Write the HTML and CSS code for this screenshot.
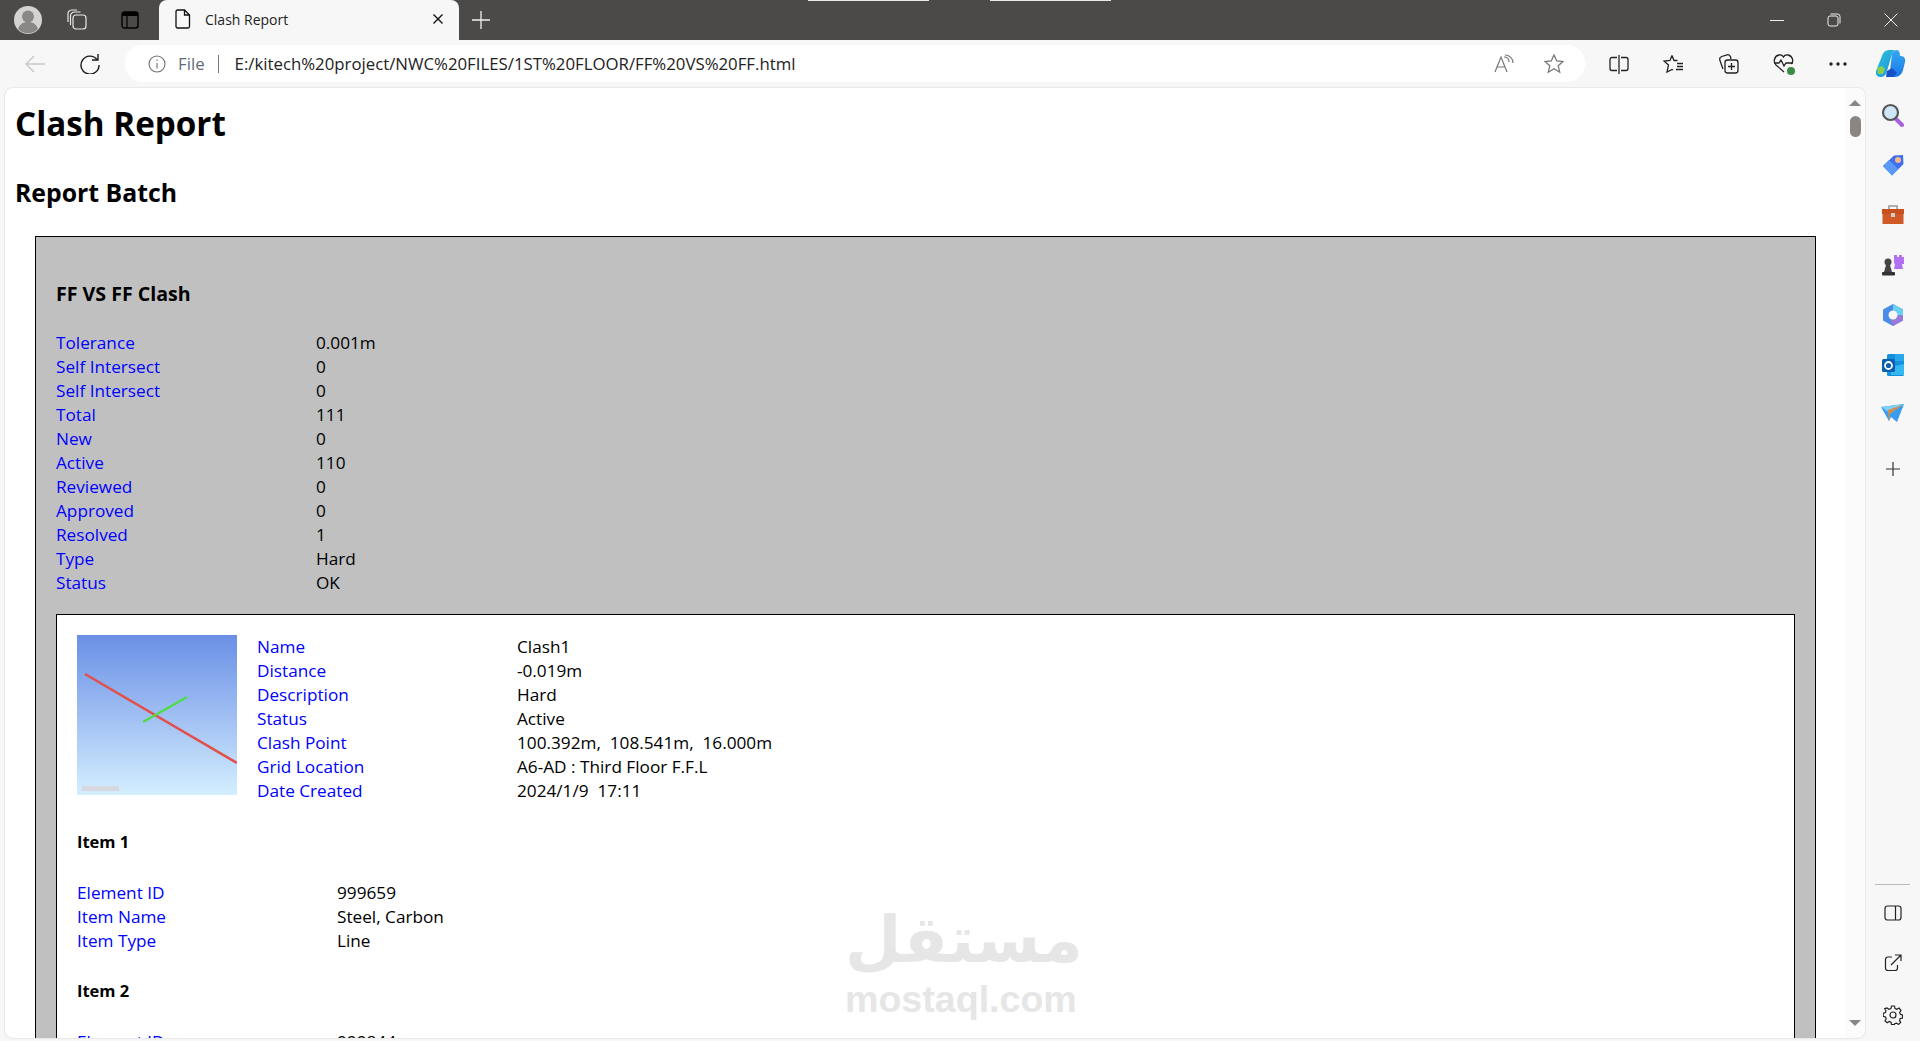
FILE: index.html
```html
<!DOCTYPE html>
<html>
<head>
    <title>Clash Report</title>
    <link rel="stylesheet" href="styles.css">
</head>
<body>
    <div class="titlebar">
        <div class="marks"><span class="mark"></span><span class="mark"></span></div>
        <svg class="tb-icon profile" width="28" height="28" viewBox="0 0 28 28"><circle cx="14" cy="14" r="14" fill="#d4d3d1"/><circle cx="14" cy="10.5" r="6" fill="#8a8886"/><path d="M4 23c2-6 6-7 10-7s8 1 10 7a14 14 0 0 1-20 0z" fill="#8a8886"/></svg>
        <svg class="tb-icon workspaces" width="22" height="22" viewBox="0 0 22 22" fill="none" stroke="#e8e8e8" stroke-width="1.2"><rect x="7" y="6" width="13" height="14" rx="3"/><path d="M4.5 16V7a4 4 0 0 1 4-4h6M2 13V6a4 4 0 0 1 4-5h5"/></svg>
        <svg class="tb-icon vtabs" width="18" height="18" viewBox="0 0 18 18"><rect x="1" y="1" width="16" height="16" rx="2.5" fill="#4c4a48" stroke="#000" stroke-width="1.4"/><rect x="1" y="1" width="16" height="4" fill="#000"/><path d="M6 5v12" stroke="#000" stroke-width="1.2"/></svg>
        <div class="tab">
            <svg width="16" height="20" viewBox="0 0 16 20" fill="none" stroke="#111" stroke-width="1.3"><path d="M2.5 1h7l5 5v11.5a1.5 1.5 0 0 1-1.5 1.5h-10.500a1.500 1.500 0 0 1-1.500-1.500V2.500A1.500 1.500 0 0 1 2.500 1z"/><path d="M9.500 1v5h5"/></svg>
            <span class="tab-title">Clash Report</span>
            <svg class="tab-close" width="12" height="12" viewBox="0 0 12 12" stroke="#111" stroke-width="1.4"><path d="M1.500 1.500l9 9M10.500 1.500l-9 9"/></svg>
        </div>
        <svg class="tb-icon newtab" width="18" height="18" viewBox="0 0 18 18" stroke="#f0f0f0" stroke-width="1.300"><path d="M9 0v18M0 9h18"/></svg>
        <div class="window-btns">
            <svg width="14" height="14" viewBox="0 0 14 14" stroke="#eee" stroke-width="1"><path d="M0 7.500h14"/></svg>
            <svg width="14" height="14" viewBox="0 0 14 14" fill="none" stroke="#eee" stroke-width="1"><rect x="1" y="3" width="10" height="10" rx="2"/><path d="M3.500 1h7a2.500 2.500 0 0 1 2.500 2.500v7"/></svg>
            <svg width="14" height="14" viewBox="0 0 14 14" stroke="#eee" stroke-width="1"><path d="M.5.5l13 13M13.500.5l-13 13"/></svg>
        </div>
    </div>

    <div class="toolbar">
        <svg class="nav-back" width="20" height="18" viewBox="0 0 20 18" fill="none" stroke="#c8c8c8" stroke-width="1.400"><path d="M20 9H1M9 1L1 9l8 8"/></svg>
        <svg class="nav-reload" width="20" height="20" viewBox="0 0 20 20" fill="none" stroke="#1a1a1a" stroke-width="1.400"><path d="M17 5.500A9 9 0 1 0 19 11"/><path d="M18 0v6h-6"/></svg>
        <div class="address">
            <svg width="18" height="18" viewBox="0 0 18 18" fill="none" stroke="#6e6e6e" stroke-width="1.100"><circle cx="9" cy="9" r="8"/><path d="M9 8v5.500M9 4.500v1.500"/></svg>
            <span class="file-label">File</span>
            <span class="addr-sep"></span>
            <span class="url">E:/kitech%20project/NWC%20FILES/1ST%20FLOOR/FF%20VS%20FF.html</span>
            <svg class="read-aloud" width="20" height="20" viewBox="0 0 20 20" fill="none" stroke="#777" stroke-width="1.200"><path d="M1 18L7 3l6 15M3 13h8"/><path d="M10 2c3 0 5 2 5 5M11 0c4 0 8 3 8 8" transform="translate(0 1)"/></svg>
            <svg class="star" width="20" height="20" viewBox="0 0 20 20" fill="none" stroke="#777" stroke-width="1.300"><path d="M10 1l2.700 6 6.300.6-4.800 4.200 1.500 6.400L10 14.800l-5.700 3.400 1.500-6.400L1 7.600 7.300 7z"/></svg>
        </div>
        <div class="tools">
            <svg width="20" height="20" viewBox="0 0 20 20" fill="none" stroke="#222" stroke-width="1.300"><path d="M8 3.500H3a2 2 0 0 0-2 2v9a2 2 0 0 0 2 2h5M12 3.500h5a2 2 0 0 1 2 2v9a2 2 0 0 1-2 2h-5M10 1v19"/></svg>
            <svg width="21" height="20" viewBox="0 0 21 20" fill="none" stroke="#222" stroke-width="1.300"><path d="M9 1.500l2 5 h3.500M9 1.500l-2 5-6 .5 4.500 4-1.500 7 5-2.500 1 .5M14 9.500h6M14 12.500h6M13 15.500h7"/></svg>
            <svg width="21" height="21" viewBox="0 0 21 21" fill="none" stroke="#222" stroke-width="1.300"><path d="M5 16L1.800 7a3 3 0 0 1 2-3.500L9 1.800a3 3 0 0 1 3.500 2L13 6"/><rect x="7" y="7" width="13" height="13" rx="2.500"/><path d="M13.500 10v7M10 13.500h7"/></svg>
            <span class="heart"><svg width="21" height="21" viewBox="0 0 21 21" fill="none" stroke="#222" stroke-width="1.300"><path d="M11 19L3 12C0 9 1 3 6 2c2-.3 4 1 4.500 2C11 3 13 1.700 15 2c5 1 6 7 3 9"/><path d="M1 10h5l2-3 3 6 2-3h7"/></svg><span class="heart-check"></span></span>
            <svg width="20" height="6" viewBox="0 0 20 6" fill="#222"><circle cx="3" cy="3" r="1.700"/><circle cx="10" cy="3" r="1.700"/><circle cx="17" cy="3" r="1.700"/></svg>
        </div>
        <svg class="copilot" width="30" height="27" viewBox="0 0 30 27"><defs><linearGradient id="cp1" x1="0" y1="0" x2="1" y2="1"><stop offset="0" stop-color="#2fc4d8"/><stop offset="1" stop-color="#1a8fe0"/></linearGradient><linearGradient id="cp2" x1="0" y1="0" x2="0" y2="1"><stop offset="0" stop-color="#35a7f0"/><stop offset="1" stop-color="#1c78e8"/></linearGradient></defs><path d="M6 6c1-4 4-6 8-6h6c-2 0-3 2-4 4l-5 17c-1 4-3 6-7 6-3 0-5-3-4-6z" fill="url(#cp1)"/><path d="M16 4c1-3 3-4 5-4 2 0 3 2 3 6h1c3 0 5 3 4 6l-2 8c-1 4-4 7-8 7H10c2-1 3-3 4-6z" fill="url(#cp2)"/><path d="M11 21l5-3 5 5-4 4h-7z" fill="#1850c8"/><path d="M1 18l5-2 3 3-2 5H2z" fill="#8ccf50"/></svg>
    </div>

    <div class="main">
        <div class="page">
            <div class="content">
                <h1>Clash Report</h1>
                <h2>Report Batch</h2>
                <div class="batch">
                    <div class="test-name">FF VS FF Clash</div>
                    <div class="rows">
                        <span class="key">Tolerance</span><span>0.001m</span>
                        <span class="key">Self Intersect</span><span>0</span>
                        <span class="key">Self Intersect</span><span>0</span>
                        <span class="key">Total</span><span>111</span>
                        <span class="key">New</span><span>0</span>
                        <span class="key">Active</span><span>110</span>
                        <span class="key">Reviewed</span><span>0</span>
                        <span class="key">Approved</span><span>0</span>
                        <span class="key">Resolved</span><span>1</span>
                        <span class="key">Type</span><span>Hard</span>
                        <span class="key">Status</span><span>OK</span>
                    </div>
                    <div class="clash">
                        <div class="clash-top">
                            <svg class="thumb" width="160" height="160" viewBox="0 0 160 160">
                                <defs><linearGradient id="sky" x1="0" y1="0" x2="0" y2="1"><stop offset="0" stop-color="#6a8fe6"/><stop offset="1" stop-color="#d4eeff"/></linearGradient></defs>
                                <rect width="160" height="160" fill="url(#sky)"/>
                                <path d="M8 39L160 128" stroke="#e2504c" stroke-width="2.600"/>
                                <path d="M66 87L110 62" stroke="#4fdc48" stroke-width="2.400"/>
                                <rect x="5" y="151" width="37" height="5" fill="#d8d8e0"/>
                            </svg>
                            <div class="rows">
                                <span class="key">Name</span><span>Clash1</span>
                                <span class="key">Distance</span><span>-0.019m</span>
                                <span class="key">Description</span><span>Hard</span>
                                <span class="key">Status</span><span>Active</span>
                                <span class="key">Clash Point</span><span>100.392m,&nbsp; 108.541m,&nbsp; 16.000m</span>
                                <span class="key">Grid Location</span><span>A6-AD : Third Floor F.F.L</span>
                                <span class="key">Date Created</span><span>2024/1/9&nbsp; 17:11</span>
                            </div>
                        </div>
                        <div class="item-title">Item 1</div>
                        <div class="rows rows-item">
                            <span class="key">Element ID</span><span>999659</span>
                            <span class="key">Item Name</span><span>Steel, Carbon</span>
                            <span class="key">Item Type</span><span>Line</span>
                        </div>
                        <div class="item-title">Item 2</div>
                        <div class="rows rows-item">
                            <span class="key">Element ID</span><span>999844</span>
                        </div>
                    </div>
                </div>
            </div>
            <div class="watermark">
                <div class="wm-ar">مستقل</div>
                <div class="wm-en">mostaql.com</div>
            </div>
            <div class="scrollbar">
                <span class="arrow-up"></span>
                <span class="thumb-bar"></span>
                <span class="arrow-down"></span>
            </div>
        </div>

        <div class="sidebar">
            <svg width="24" height="24" viewBox="0 0 24 24"><path d="M14 15l7 7" stroke="#a85fe0" stroke-width="4" stroke-linecap="round"/><circle cx="9.500" cy="9.500" r="7.500" fill="#cfe6fa" stroke="#555" stroke-width="2.200"/></svg>
            <svg width="24" height="24" viewBox="0 0 24 24"><path d="M2 13L13 2.500 22 2l.5 9L11 22.500z" fill="#3f6ff0"/><path d="M2 13l6-6 9 9-6 6.500z" fill="#5a9af5"/><circle cx="17" cy="7" r="3" fill="#f5b98a"/></svg>
            <svg width="24" height="24" viewBox="0 0 24 24"><path d="M8 6V3h8v3" fill="none" stroke="#999" stroke-width="1.600"/><rect x="1" y="6" width="22" height="5" fill="#c84f1e"/><rect x="1.500" y="11" width="21" height="10" fill="#d05a25"/><rect x="10" y="10" width="4" height="4" fill="#ccc"/></svg>
            <svg width="24" height="24" viewBox="0 0 24 24"><path d="M14 2h2v2h2V2h3v2h2v7h-2l1 5H13l1-5-1-1V2z" fill="#b070f0"/><circle cx="7" cy="9" r="3.500" fill="#444"/><path d="M5 12h4l2 7H3z" fill="#444"/><rect x="1" y="19" width="13" height="3.500" rx="1" fill="#333"/></svg>
            <svg width="24" height="24" viewBox="0 0 24 24"><path d="M12 1l10 5.500v11L12 23 2 17.500v-11z" fill="#4a8de8"/><path d="M12 1l10 5.500v6L16 12a4.500 4.500 0 0 0-4-4.500z" fill="#6ad0f0"/><path d="M22 12.500v5L12 23l-3-7a4.500 4.500 0 0 0 7-4z" fill="#9a78d8"/><circle cx="12" cy="12" r="4.500" fill="#f7f7f7"/></svg>
            <svg width="24" height="24" viewBox="0 0 24 24"><rect x="6" y="1" width="17" height="22" rx="1.500" fill="#1490df"/><rect x="14" y="1" width="9" height="7" fill="#28a8ea"/><path d="M10 14l13-3v11H10z" fill="#35b8f1"/><rect x="1" y="6" width="13" height="13" rx="1.500" fill="#0a5fb0"/><circle cx="7.500" cy="12.500" r="3.500" fill="none" stroke="#fff" stroke-width="1.800"/></svg>
            <svg width="24" height="20" viewBox="0 0 24 20"><path d="M0 4l23-3-7 18-6-5-2 4z" fill="#3b9cf0"/><path d="M0 4l23-3L9 10z" fill="#7cd0f5"/><path d="M7 7l14-5L9 11 8 19z" fill="#d09048"/></svg>
            <svg class="side-plus" width="14" height="14" viewBox="0 0 14 14" stroke="#333" stroke-width="1.200"><path d="M7 0v14M0 7h14"/></svg>
            <div class="side-bottom">
                <span class="side-rule"></span>
                <svg width="18" height="16" viewBox="0 0 18 16" fill="none" stroke="#222" stroke-width="1.200"><rect x="1" y="1" width="16" height="14" rx="2.500"/><path d="M11.500 1v14"/></svg>
                <svg width="18" height="18" viewBox="0 0 18 18" fill="none" stroke="#222" stroke-width="1.200"><path d="M8 3H4a2.500 2.500 0 0 0-2.500 2.500V14A2.500 2.500 0 0 0 4 16.500h7A2.500 2.500 0 0 0 13.500 14v-3"/><path d="M7 11L17 1M11 1h6v6"/></svg>
                <svg width="20" height="20" viewBox="0 0 20 20" fill="none" stroke="#222" stroke-width="1.200"><circle cx="10" cy="10" r="3"/><path d="M8.500 1h3l.5 2.500 1.800.8L16 3l2 2.300-1.300 2.100.6 1.800 2.200.8v3l-2.300.6-.7 1.800 1.200 2-2.200 2-2-1.300-1.800.7L11.500 19.500h-3L8 17.200l-1.800-.7-2 1.300-2.200-2 1.200-2-.7-1.800L.2 11.400v-3l2.200-.8.600-1.800L1.700 3.700 4 3l1.800 1.300 2.200-.8z"/></svg>
            </div>
        </div>
    </div>
</body>
</html>
```

FILE: styles.css
```css
* {
    box-sizing: border-box;
}

html,
body {
    height: 100%;
}

body {
    margin: 0;
    overflow: hidden;
    display: flex;
    flex-direction: column;
    background-color: #f7f7f7;
    font-family: "Open Sans", "Noto Sans", sans-serif;
}

svg {
    display: block;
    flex: none;
}

/* title bar */
.titlebar {
    position: relative;
    height: 40px;
    flex: none;
    display: flex;
    align-items: center;
    padding-left: 14px;
    background-color: #4c4a48;
}

.marks {
    position: absolute;
    top: 0;
    left: 808px;
    display: flex;
    gap: 61px;
}

.mark {
    width: 121px;
    height: 1px;
    background-color: #e8e8e8;
}

.workspaces {
    margin-left: 24px;
}

.vtabs {
    margin-left: 33px;
}

.tab {
    width: 300px;
    height: 40px;
    margin-left: 20px;
    padding: 0 15px 2px 16px;
    display: flex;
    align-items: center;
    background-color: #f7f7f7;
    border-radius: 8px 8px 0 0;
}

.tab-title {
    margin-left: 14px;
    font-size: 14px;
    color: #222;
}

.tab-close {
    margin-left: auto;
}

.newtab {
    margin-left: 13px;
}

.window-btns {
    margin-left: auto;
    padding-right: 22px;
    display: flex;
    gap: 43px;
}

/* toolbar */
.toolbar {
    height: 48px;
    flex: none;
    display: flex;
    align-items: center;
    padding: 0 0 1px 25px;
}

.nav-reload {
    margin-left: 35px;
}

.address {
    width: 1460px;
    height: 37px;
    margin-left: 25px;
    padding: 0 21px 0 23px;
    display: flex;
    align-items: center;
    background-color: #fff;
    border-radius: 18px;
}

.file-label {
    margin-left: 12px;
    font-size: 16.800px;
    color: #5f6b7a;
}

.addr-sep {
    width: 1px;
    height: 18px;
    margin: 0 16px 0 13px;
    background-color: #777;
}

.url {
    font-size: 16.800px;
    color: #222;
}

.read-aloud {
    margin-left: auto;
}

.star {
    margin-left: 30px;
}

.tools {
    margin-left: 24px;
    display: flex;
    align-items: center;
    gap: 34px;
}

.heart {
    position: relative;
    display: block;
}

.heart-check {
    position: absolute;
    right: -1px;
    bottom: -1px;
    width: 8px;
    height: 8px;
    border-radius: 50%;
    background-color: #3b8a45;
}

.copilot {
    margin-left: 28px;
}

/* page area */
.main {
    flex: 1;
    min-height: 0;
    display: flex;
}

.page {
    position: relative;
    width: 1860px;
    height: 950px;
    margin-left: 5px;
    overflow: hidden;
    background-color: #fff;
    border-radius: 8px;
    box-shadow: 0 0 2px rgba(0, 0, 0, 0.2);
}

.content {
    padding: 14px 49px 0 10px;
    font-size: 17.200px;
    line-height: 24px;
    color: #000;
}

h1 {
    margin: 0 0 30px;
    font-size: 33.200px;
    line-height: 44px;
}

h2 {
    margin: 0 0 27px;
    font-size: 24.800px;
    line-height: 33px;
}

.batch {
    margin-left: 20px;
    padding: 44px 20px 20px;
    background-color: #c0c0c0;
    border: 1px solid #000;
}

.test-name {
    margin-bottom: 24px;
    font-size: 19.600px;
    font-weight: bold;
    line-height: 26px;
}

.rows {
    display: grid;
    grid-template-columns: 260px 1fr;
}

.key {
    color: #00f;
}

.clash {
    margin-top: 19px;
    padding: 20px;
    background-color: #fff;
    border: 1px solid #000;
}

.clash-top {
    display: flex;
    gap: 20px;
    padding-bottom: 1px;
}

.clash-top .rows {
    flex: 1;
    align-self: flex-start;
}

.item-title {
    margin: 26px 0 27px;
    font-size: 16.500px;
    font-weight: bold;
}

/* watermark */
.watermark {
    position: absolute;
    left: 840px;
    top: 821px;
    width: 230px;
    text-align: center;
    color: #e6e6e6;
    font-family: "DejaVu Sans", sans-serif;
    font-weight: bold;
}

.wm-ar {
    margin-bottom: 10px;
    font-size: 65px;
    line-height: 62px;
}

.wm-en {
    font-family: "Liberation Sans", sans-serif;
    font-size: 37.600px;
    line-height: 36px;
}

/* scrollbar */
.scrollbar {
    position: absolute;
    top: 0;
    right: 0;
    width: 20px;
    height: 100%;
    padding-top: 12px;
    display: flex;
    flex-direction: column;
    align-items: center;
    background-color: #fbfbfb;
}

.arrow-up,
.arrow-down {
    width: 0;
    height: 0;
    border-left: 6px solid transparent;
    border-right: 6px solid transparent;
}

.arrow-up {
    border-bottom: 6px solid #8a8684;
}

.arrow-down {
    margin-top: auto;
    margin-bottom: 12px;
    border-top: 6px solid #8a8684;
}

.thumb-bar {
    width: 11px;
    height: 21px;
    margin-top: 10px;
    background-color: #8a8684;
    border-radius: 6px;
}

/* sidebar */
.sidebar {
    flex: 1;
    display: flex;
    flex-direction: column;
    align-items: center;
    padding-top: 15px;
    gap: 26px;
}

.side-plus {
    margin-top: 13px;
}

.side-bottom {
    margin-top: auto;
    padding-bottom: 16px;
    display: flex;
    flex-direction: column;
    align-items: center;
    gap: 33px;
}

.side-rule {
    width: 35px;
    height: 1px;
    background-color: #bbb;
    margin-bottom: -13px;
}
```
